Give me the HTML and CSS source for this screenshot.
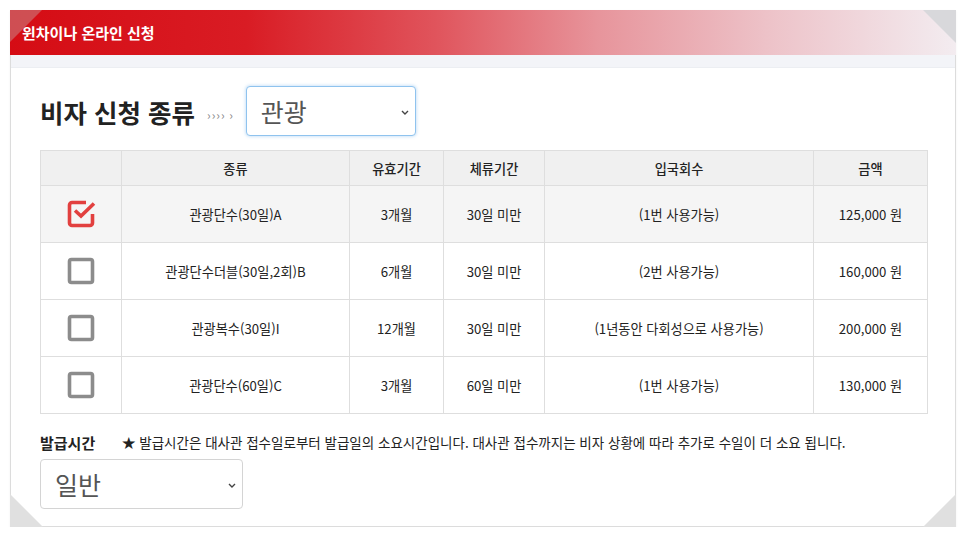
FILE: index.html
```html
<!DOCTYPE html>
<html lang="ko">
<head>
<meta charset="utf-8">
<title>윈차이나 온라인 신청</title>
<link rel="stylesheet" href="styles.css">
</head>
<body>
<div class="card">
  <span class="corner corner-tr"></span>
  <span class="corner corner-bl"></span>
  <span class="corner corner-br"></span>
  <div class="card-head">윈차이나 온라인 신청</div>
  <div class="card-strip"></div>
  <div class="card-body">
    <div class="type-row">
      <h2 class="type-title">비자 신청 종류</h2>
      <span class="arrows">›››› ›</span>
      <div class="select select-focus">
        <span class="select-text">관광</span>
        <svg class="chev" width="8" height="5" viewBox="0 0 8 5"><path d="M1 1 L4 4 L7 1" fill="none" stroke="#444" stroke-width="1.4"/></svg>
      </div>
    </div>
    <table class="visa">
      <thead>
        <tr><th class="c-chk"></th><th class="c-kind">종류</th><th class="c-valid">유효기간</th><th class="c-stay">체류기간</th><th class="c-entry">입국회수</th><th class="c-price">금액</th></tr>
      </thead>
      <tbody>
        <tr class="on">
          <td><svg class="box" width="30" height="30" viewBox="0 0 30 30"><path d="M20 3.5 H6 a2.5 2.5 0 0 0 -2.5 2.5 V24 a2.5 2.5 0 0 0 2.5 2.5 H24 a2.5 2.5 0 0 0 2.5 -2.5 V15" fill="none" stroke="#e2403f" stroke-width="3.6"/><path d="M9 11.5 L15 17 L28 4.5" fill="none" stroke="#e2403f" stroke-width="3.6"/></svg></td>
          <td>관광단수(30일)A</td><td>3개월</td><td>30일 미만</td><td>(1번 사용가능)</td><td>125,000 원</td>
        </tr>
        <tr>
          <td><svg class="box" width="30" height="30" viewBox="0 0 30 30"><rect x="3.5" y="3.5" width="23" height="23" rx="2" fill="none" stroke="#8c8c8c" stroke-width="3.6"/></svg></td>
          <td>관광단수더블(30일,2회)B</td><td>6개월</td><td>30일 미만</td><td>(2번 사용가능)</td><td>160,000 원</td>
        </tr>
        <tr>
          <td><svg class="box" width="30" height="30" viewBox="0 0 30 30"><rect x="3.5" y="3.5" width="23" height="23" rx="2" fill="none" stroke="#8c8c8c" stroke-width="3.6"/></svg></td>
          <td>관광복수(30일)I</td><td>12개월</td><td>30일 미만</td><td>(1년동안 다회성으로 사용가능)</td><td>200,000 원</td>
        </tr>
        <tr>
          <td><svg class="box" width="30" height="30" viewBox="0 0 30 30"><rect x="3.5" y="3.5" width="23" height="23" rx="2" fill="none" stroke="#8c8c8c" stroke-width="3.6"/></svg></td>
          <td>관광단수(60일)C</td><td>3개월</td><td>60일 미만</td><td>(1번 사용가능)</td><td>130,000 원</td>
        </tr>
      </tbody>
    </table>
    <div class="time-row">
      <span class="time-label">발급시간</span>
      <span class="time-note">★ 발급시간은 대사관 접수일로부터 발급일의 소요시간입니다. 대사관 접수까지는 비자 상황에 따라 추가로 수일이 더 소요 됩니다.</span>
    </div>
    <div class="select select-plain">
      <span class="select-text">일반</span>
      <svg class="chev" width="8" height="5" viewBox="0 0 8 5"><path d="M1 1 L4 4 L7 1" fill="none" stroke="#444" stroke-width="1.4"/></svg>
    </div>
  </div>
</div>
</body>
</html>
```

FILE: styles.css
```css
* { box-sizing: border-box; }
html, body { margin: 0; padding: 0; background: #ffffff; }
body {
  font-family: "Noto Sans CJK KR", "Noto Sans", sans-serif;
  color: #333;
  padding: 10px 10px 0 10px;
}
.card {
  position: relative;
  width: 946px;
  height: 517px;
  border: 1px solid #dcdcdc;
  border-top: none;
  background: #fff;
  box-shadow: 0 1px 2px rgba(0,0,0,0.06);
}
.corner {
  position: absolute;
  z-index: 2;
  width: 33px;
  height: 33px;
  background: #d8d8db;
}
.corner-tr {
  right: -1px; top: 0;
  clip-path: polygon(0 0, 100% 0, 100% 100%);
}
.corner-bl {
  left: -1px; bottom: -1px;
  clip-path: polygon(0 0, 0 100%, 100% 100%);
  background: #e0e0e0;
}
.corner-br {
  right: -1px; bottom: -1px;
  clip-path: polygon(100% 0, 100% 100%, 0 100%);
  background: #e0e0e0;
}
.card-head {
  position: relative;
  height: 45px;
  margin: 0 -1px;
  padding-left: 12px;
  display: flex;
  align-items: center;
  color: #fff;
  font-size: 15px;
  font-weight: 700;
  background: linear-gradient(to right, #d50c14 0%, #d91c24 25%, #e0545c 45%, #e7949b 62%, #edc2c8 80%, #f3ecf0 100%);
}
.card-head::before {
  content: "";
  position: absolute;
  left: 0; top: 0;
  width: 32px; height: 32px;
  background: rgba(200, 160, 160, 0.45);
  clip-path: polygon(0 0, 100% 0, 0 100%);
}
.card-strip {
  height: 13px;
  background: #f3f4f8;
  border-bottom: 1px solid #eceef2;
}
.card-body {
  padding: 18px 28px 0 29px;
}
.type-row {
  display: flex;
  align-items: center;
  height: 50px;
}
.type-title {
  margin: 0;
  font-size: 25.5px;
  font-weight: 700;
  color: #222;
  letter-spacing: 0;
}
.arrows {
  margin: 6px 12px 0 12px;
  font-size: 12px;
  color: #888;
  letter-spacing: 1px;
}
.select {
  display: flex;
  align-items: center;
  justify-content: space-between;
  height: 50px;
  background: #fff;
  border-radius: 4px;
  padding: 0 6px 0 14px;
}
.select-text {
  font-size: 25px;
  color: #555;
}
.select-focus {
  width: 170px;
  border: 1px solid #8fc3ee;
  box-shadow: 0 0 3px 1px rgba(120, 180, 235, 0.35);
}
.select-plain {
  width: 203px;
  border: 1px solid #d4d4d4;
  margin-top: 7px;
}
.chev { display: block; margin-top: 2px; }
.visa {
  margin-top: 14px;
  width: 887px;
  border-collapse: collapse;
  table-layout: fixed;
  font-size: 13.2px;
}
.visa th, .visa td {
  border: 1px solid #dedede;
  text-align: center;
  padding: 0;
  color: #222;
}
.visa th {
  height: 35px;
  background: #f0f0f0;
  font-weight: 500;
}
.visa td { height: 57px; }
.visa tr.on td { background: #f5f5f5; }
.box { display: block; margin: 0 auto; }
.c-chk { width: 81px; }
.c-kind { width: 228px; }
.c-valid { width: 94px; }
.c-stay { width: 101px; }
.c-entry { width: 269px; }
.c-price { width: 114px; }
.time-row {
  display: flex;
  align-items: center;
  margin-top: 18px;
  height: 20px;
}
.time-label {
  font-size: 15px;
  font-weight: 700;
  color: #222;
  width: 82px;
}
.time-note {
  font-size: 13.5px;
  color: #222;
}
```
